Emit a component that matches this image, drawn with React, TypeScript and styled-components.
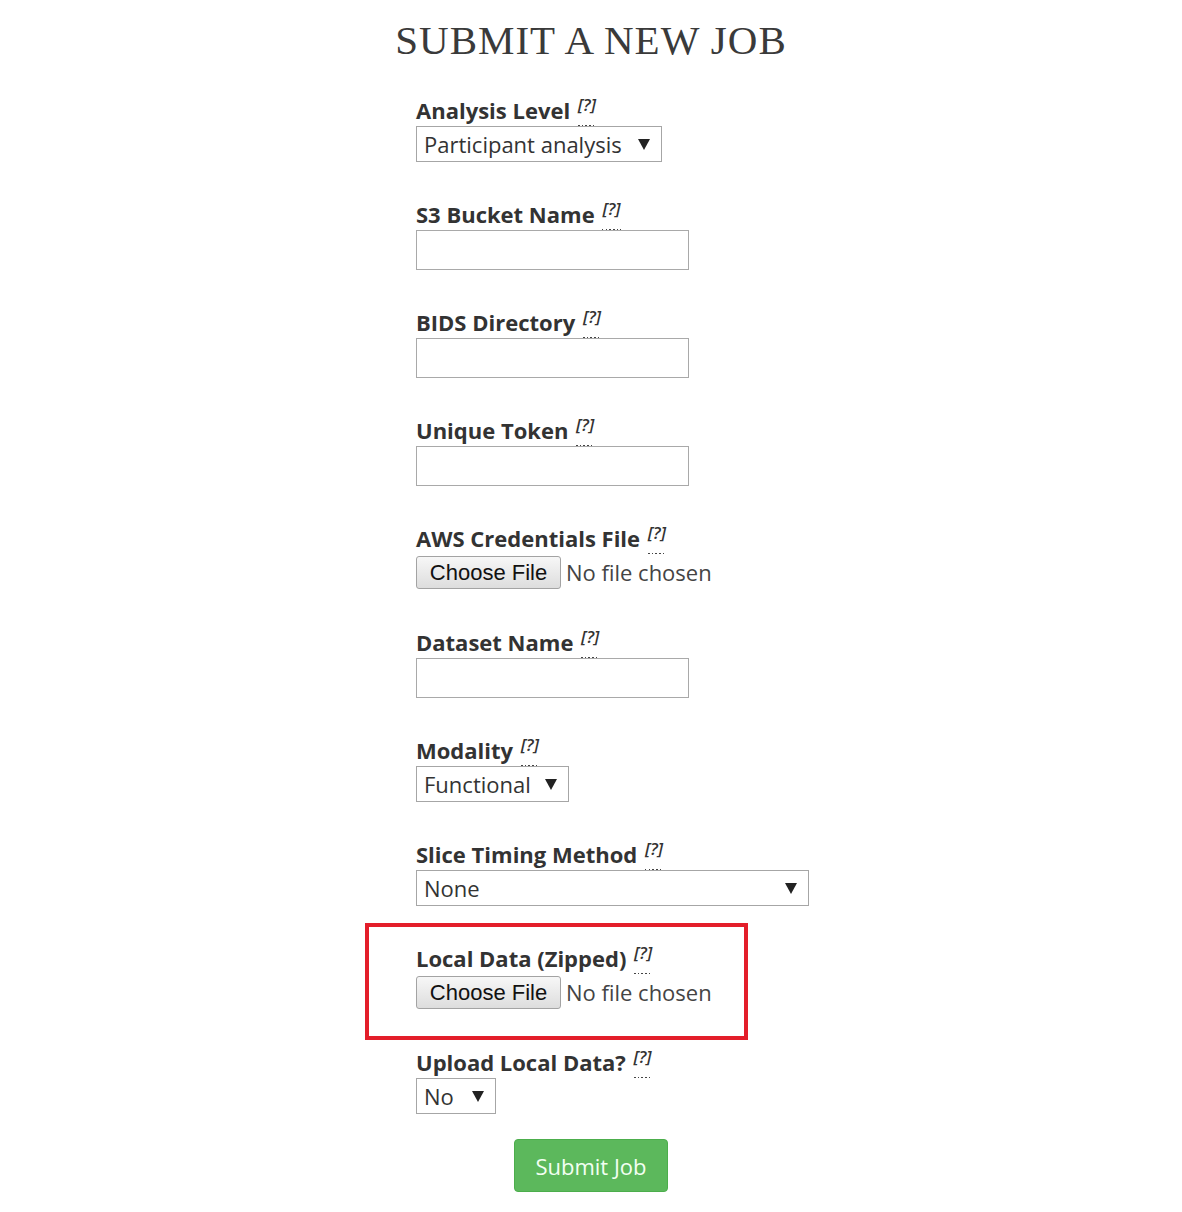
import styled, { createGlobalStyle } from "styled-components";

const GlobalStyle = createGlobalStyle`
  html, body {
    margin: 0;
    padding: 0;
    background: #ffffff;
  }
  body {
    font-family: "Open Sans", "Liberation Sans", sans-serif;
    color: #333;
  }
`;

type Field =
  | { kind: "select"; label: string; value: string; width: number }
  | { kind: "text"; label: string }
  | { kind: "file"; label: string; marked?: boolean };

const fields: Field[] = [
  { kind: "select", label: "Analysis Level", value: "Participant analysis", width: 246 },
  { kind: "text", label: "S3 Bucket Name" },
  { kind: "text", label: "BIDS Directory" },
  { kind: "text", label: "Unique Token" },
  { kind: "file", label: "AWS Credentials File" },
  { kind: "text", label: "Dataset Name" },
  { kind: "select", label: "Modality", value: "Functional", width: 153 },
  { kind: "select", label: "Slice Timing Method", value: "None", width: 393 },
  { kind: "file", label: "Local Data (Zipped)", marked: true },
  { kind: "select", label: "Upload Local Data?", value: "No", width: 80 },
];

const Arrow = () => (
  <svg width="12" height="11" viewBox="0 0 12 11">
    <polygon points="0,0 12,0 6,11" fill="#222" />
  </svg>
);

export default function App() {
  return (
    <Page>
      <GlobalStyle />
      <Title>SUBMIT A NEW JOB</Title>
      <Form>
        {fields.map((f) => (
          <Group key={f.label} $marked={f.kind === "file" && !!f.marked}>
            <Label>
              {f.label} <Help title="help">[?]</Help>
            </Label>
            {f.kind === "select" && (
              <SelectBox $width={f.width}>
                <span>{f.value}</span>
                <Arrow />
              </SelectBox>
            )}
            {f.kind === "text" && <TextInput type="text" />}
            {f.kind === "file" && (
              <FileRow>
                <FileButton type="button">Choose File</FileButton>
                <FileStatus>No file chosen</FileStatus>
              </FileRow>
            )}
          </Group>
        ))}
        <SubmitRow>
          <SubmitButton type="button">Submit Job</SubmitButton>
        </SubmitRow>
      </Form>
    </Page>
  );
}

const Page = styled.div`
  width: 100%;
  min-height: 1212px;
  padding-top: 17px;
  box-sizing: border-box;
`;

const Title = styled.h1`
  margin: 0 0 33px;
  text-align: center;
  font-family: "Liberation Serif", serif;
  font-weight: normal;
  font-size: 41px;
  line-height: 46px;
  letter-spacing: 1px;
  color: #3a3a3a;
`;

const Form = styled.form`
  width: 350px;
  margin: 0 auto;
`;

const Group = styled.div<{ $marked: boolean }>`
  position: relative;
  margin-bottom: 38px;

  ${({ $marked }) =>
    $marked &&
    `
    &::after {
      content: "";
      position: absolute;
      left: -51px;
      top: -21px;
      width: 383px;
      height: 117px;
      border: 4px solid #e31e2a;
      box-sizing: border-box;
      pointer-events: none;
    }
  `}
`;

const Label = styled.label`
  display: block;
  font-size: 22px;
  font-weight: 700;
  line-height: 28px;
  margin-bottom: 2px;
  color: #333;
  white-space: nowrap;
`;

const Help = styled.abbr`
  display: inline-block;
  vertical-align: top;
  height: 30px;
  margin-bottom: -4px;
  margin-left: 2px;
  padding-top: 0;
  box-sizing: border-box;
  font-size: 17px;
  line-height: 17px;
  font-style: italic;
  font-weight: 600;
  text-decoration: none;
  color: #333;
  background-image: repeating-linear-gradient(
    to right,
    #444 0,
    #444 1.5px,
    transparent 1.5px,
    transparent 3.7px
  );
  background-size: 100% 1px;
  background-repeat: no-repeat;
  background-position: bottom left;
`;

const SelectBox = styled.div<{ $width: number }>`
  display: flex;
  align-items: center;
  justify-content: space-between;
  width: ${({ $width }) => $width}px;
  height: 36px;
  box-sizing: border-box;
  padding: 0 11px 0 7px;
  border: 1px solid #a6a6a6;
  background: #fff;
  font-size: 22px;
  color: #333;
`;

const TextInput = styled.input`
  display: block;
  width: 273px;
  height: 40px;
  box-sizing: border-box;
  border: 1px solid #a9a9a9;
  background: #fff;
  margin: 0;
  padding: 0 6px;
  font-size: 22px;
  font-family: "Open Sans", sans-serif;
  outline: none;
`;

const FileRow = styled.div`
  display: flex;
  align-items: center;
  gap: 5px;
  height: 36px;
`;

const FileButton = styled.button`
  width: 145px;
  height: 33px;
  margin: 1px 0 0;
  padding: 0;
  border: 1px solid #a3a3a3;
  border-radius: 3px;
  background: linear-gradient(#f7f7f7, #dddddd);
  font-family: "Liberation Sans", Arial, sans-serif;
  font-size: 22px;
  color: #111;
`;

const FileStatus = styled.span`
  font-size: 22px;
  color: #444;
  white-space: nowrap;
`;

const SubmitRow = styled.div`
  display: flex;
  justify-content: center;
  margin-top: -13px;
`;

const SubmitButton = styled.button`
  width: 154px;
  height: 53px;
  border: 1px solid #4cae4c;
  border-radius: 4px;
  background: #5cb85c;
  color: #f2fff2;
  font-family: "Open Sans", sans-serif;
  font-size: 22px;
  padding: 0;
`;
